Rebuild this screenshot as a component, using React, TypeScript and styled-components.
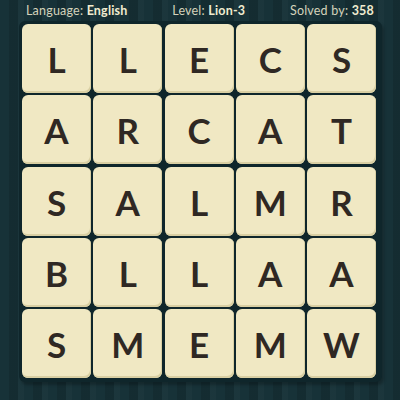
import styled, { createGlobalStyle } from "styled-components";

const GlobalStyle = createGlobalStyle`
  html, body {
    margin: 0;
    padding: 0;
  }
  body {
    width: 400px;
    height: 400px;
    overflow: hidden;
    background-color: #173238;
    background-image: repeating-linear-gradient(
      90deg,
      rgba(0, 0, 0, 0) 0px,
      rgba(0, 0, 0, 0) 9px,
      rgba(0, 0, 0, 0.12) 9px,
      rgba(0, 0, 0, 0.12) 18px,
      rgba(255, 255, 255, 0.02) 18px,
      rgba(255, 255, 255, 0.02) 24px
    );
    font-family: Lato, "Noto Sans", sans-serif;
  }
`;

const grid = [
  ["L", "L", "E", "C", "S"],
  ["A", "R", "C", "A", "T"],
  ["S", "A", "L", "M", "R"],
  ["B", "L", "L", "A", "A"],
  ["S", "M", "E", "M", "W"],
];

export default function App() {
  return (
    <>
      <GlobalStyle />
      <Page>
        <Header>
          <Info>
            Language: <b>English</b>
          </Info>
          <Info>
            Level: <b>Lion-3</b>
          </Info>
          <Info>
            Solved by: <b>358</b>
          </Info>
        </Header>
        <Board>
          {grid.flat().map((letter, i) => (
            <Tile key={i}>{letter}</Tile>
          ))}
        </Board>
      </Page>
    </>
  );
}

const Page = styled.div`
  width: 400px;
  height: 400px;
  display: flex;
  flex-direction: column;
  align-items: center;
`;

const Header = styled.header`
  box-sizing: border-box;
  width: 400px;
  height: 21px;
  padding: 0 26px 0 26px;
  display: flex;
  justify-content: space-between;
  align-items: center;
`;

const Info = styled.span`
  font-size: 12.5px;
  color: #d4d3bb;
  letter-spacing: 0.2px;

  b {
    font-weight: 700;
    color: #f1ecd0;
  }
`;

const Board = styled.section`
  margin-left: 1px;
  padding: 3px 6px 4px 3px;
  background: #0f262b;
  border-radius: 6px;
  display: grid;
  grid-template-columns: repeat(5, 69px);
  grid-auto-rows: 69px;
  gap: 2.25px;
  box-shadow: 2px 3px 3px rgba(0, 0, 0, 0.25);
`;

const Tile = styled.div`
  background: #f0e8c3;
  border-radius: 6px;
  box-shadow: inset -1px -2px 0 #d9cfa3;
  display: flex;
  align-items: center;
  justify-content: center;
  padding-top: 1px;
  font-family: Lato, "Noto Sans", sans-serif;
  font-weight: 700;
  font-size: 35px;
  color: #2f2823;
`;
